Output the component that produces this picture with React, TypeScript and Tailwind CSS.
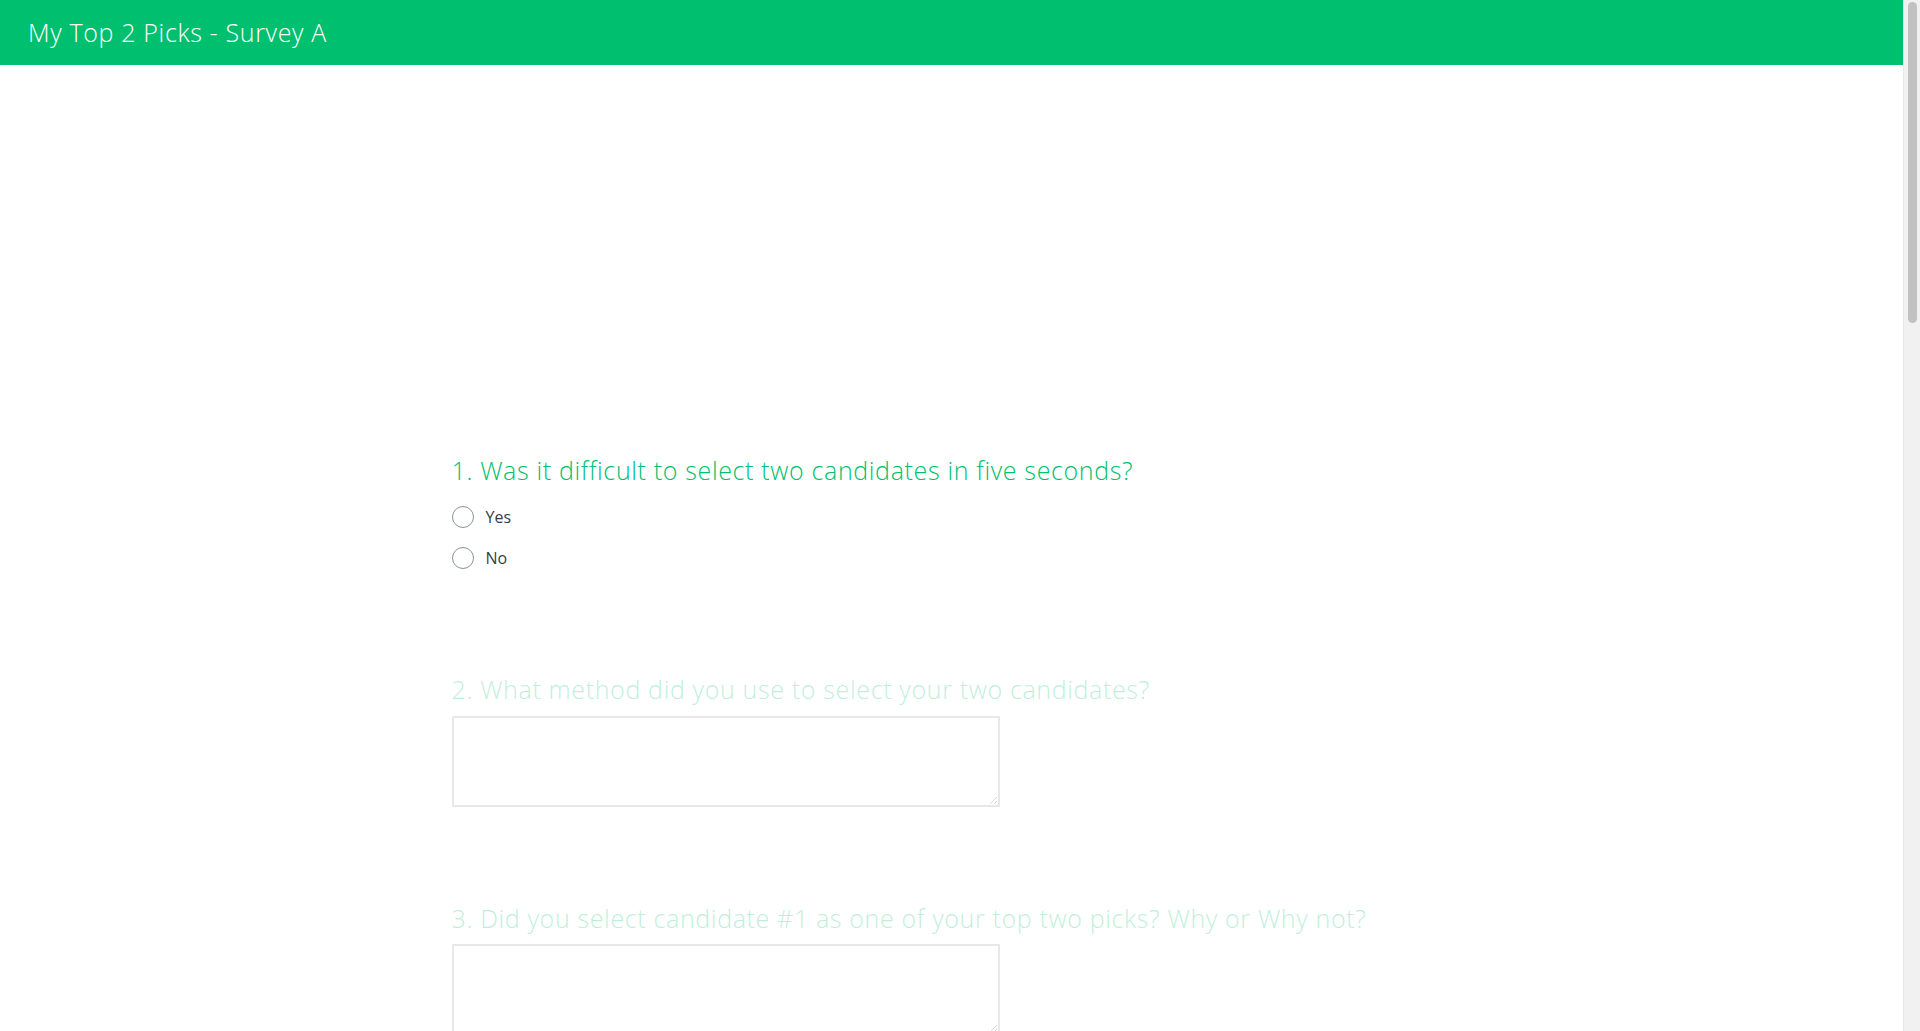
import React from 'react';

const question = "text-[#00bf6f] text-[25px] leading-[32px] tracking-[0.65px] font-light font-['Open_Sans','Liberation_Sans',sans-serif]";

const Radio: React.FC<{ label: string }> = ({ label }) => (
  <label className="h-[41px] flex items-center gap-[12px] cursor-pointer">
    <span className="w-[22px] h-[22px] rounded-full border-[1.5px] border-[#8a9499] bg-white" />
    <span className="text-[16px] text-[#333e48] font-['Open_Sans','Liberation_Sans',sans-serif]">{label}</span>
  </label>
);

export default function App() {
  return (
    <div className="min-h-[3300px] bg-white pr-[17px] font-['Roboto','Liberation_Sans',sans-serif]">
      <header className="h-[65px] bg-[#00bf6f] flex items-center pl-[28px]">
        <h1 className="text-white text-[25px] tracking-[0.65px] font-light font-['Open_Sans','Liberation_Sans',sans-serif]">
          My Top 2 Picks - Survey A
        </h1>
      </header>

      <main className="w-[1000px] mx-auto pt-[389px]">
        <section>
          <h2 className={question}>1. Was it difficult to select two candidates in five seconds?</h2>
          <div className="mt-[10px] flex flex-col">
            <Radio label="Yes" />
            <Radio label="No" />
          </div>
        </section>

        <section className="mt-[95px] opacity-25">
          <h2 className={question}>2. What method did you use to select your two candidates?</h2>
          <textarea className="mt-[11px] block w-[548px] h-[91px] border-2 border-[#a0a6aa] bg-white" />
        </section>

        <section className="mt-[95px] opacity-25">
          <h2 className={question}>3. Did you select candidate #1 as one of your top two picks? Why or Why not?</h2>
          <textarea className="mt-[10px] block w-[548px] h-[91px] border-2 border-[#a0a6aa] bg-white" />
        </section>
      </main>

      {/* browser scrollbar */}
      <div className="fixed top-0 right-0 w-[17px] h-full bg-[#f1f1f1] border-l border-[#e8e8e8]">
        <div className="mx-auto mt-[2px] w-[9px] h-[321px] rounded-full bg-[#c1c1c1]" />
      </div>
    </div>
  );
}
